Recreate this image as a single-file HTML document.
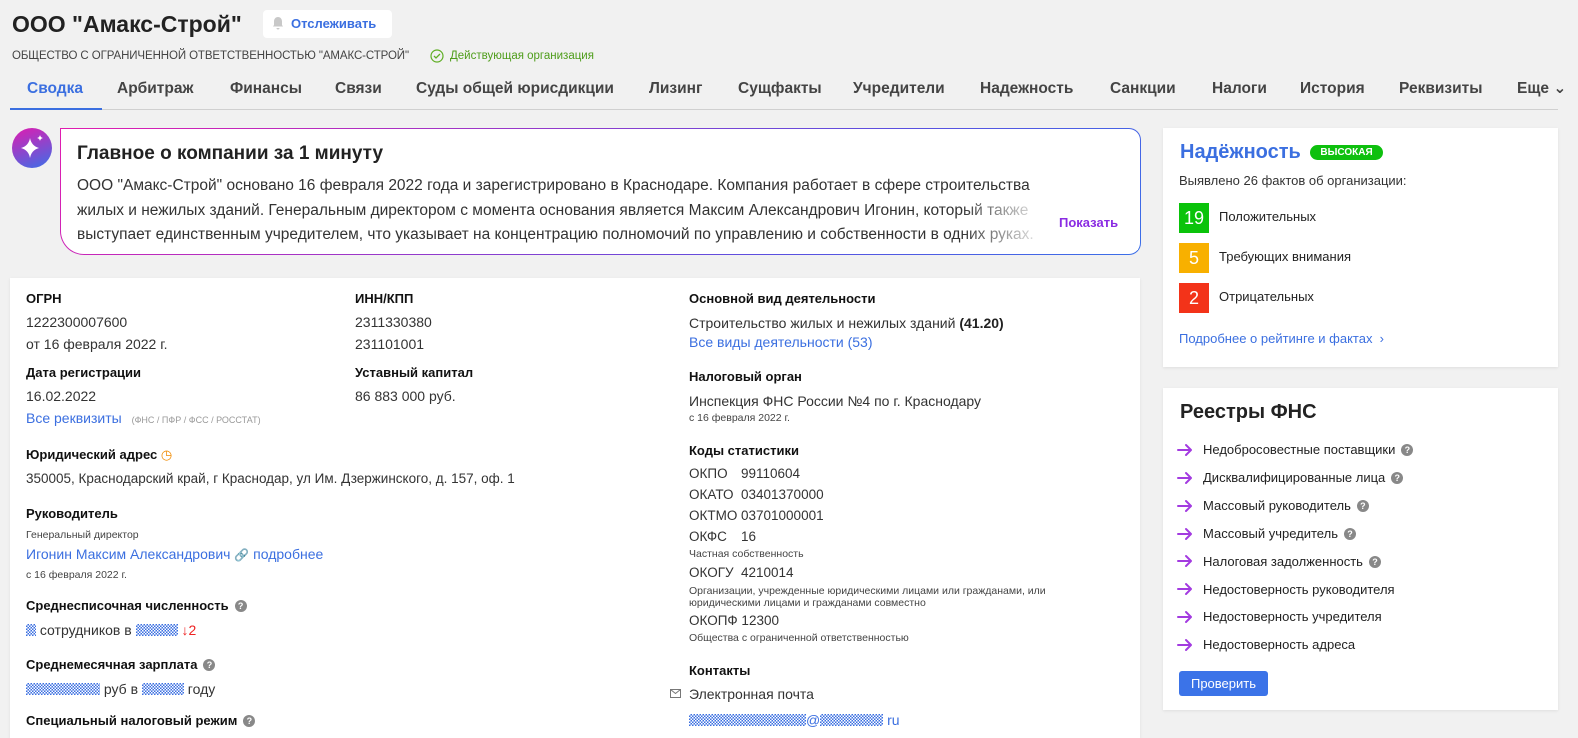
<!DOCTYPE html>
<html><head><meta charset="utf-8"><style>
*{margin:0;padding:0;box-sizing:border-box}
body{width:1578px;height:729px;overflow:hidden;background:#f1f1f1;font-family:"Liberation Sans","DejaVu Sans",sans-serif;color:#333;position:relative}
.a{position:absolute;white-space:nowrap;line-height:18px;font-size:14px}
.h{font-weight:bold;font-size:13px;color:#111}
.s{font-size:10.5px;color:#444}
.l{color:#3b6fe0}
.card{position:absolute;background:#fff;box-shadow:0 1px 3px rgba(0,0,0,.08)}
.tab{position:absolute;top:79px;font-size:15.5px;font-weight:bold;color:#444;line-height:20px}
.q{display:inline-block;width:12px;height:12px;border-radius:50%;background:#888;color:#fff;font-size:9px;line-height:12px;text-align:center;font-weight:bold;vertical-align:1px;margin-left:6px}
.chk{display:inline-block;height:12px;vertical-align:-1px;background-image:repeating-conic-gradient(#3b6fe0 0 25%,#fff 0 50%);background-size:3px 3px}
.sq{position:absolute;left:1179px;width:30px;height:30px;color:#fff;font-size:18px;text-align:center;line-height:30px}
.k{font-size:13.5px}
</style></head><body>
<div class="a" style="left:12px;top:10px;font-size:23px;line-height:28px;font-weight:bold;color:#222">ООО "Амакс-Строй"</div>
<div class="card" style="left:263px;top:10px;width:129px;height:28px;border-radius:4px;box-shadow:none"></div>
<svg style="position:absolute;left:272px;top:16px" width="12" height="14" viewBox="0 0 12 14"><path d="M6 1c-2.5 0-4 2-4 4.5V9L1 10.5h10L10 9V5.5C10 3 8.5 1 6 1zM4.5 12a1.5 1.5 0 003 0z" fill="#c8c8c8"/></svg>
<div class="a l" style="left:291px;top:15px;font-size:13px;font-weight:bold">Отслеживать</div>
<div class="a" style="left:12px;top:47px;font-size:11.5px;color:#444;letter-spacing:-.1px">ОБЩЕСТВО С ОГРАНИЧЕННОЙ ОТВЕТСТВЕННОСТЬЮ "АМАКС-СТРОЙ"</div>
<svg style="position:absolute;left:430px;top:49px" width="14" height="14"><circle cx="7" cy="7" r="6" fill="none" stroke="#5fae24" stroke-width="1.2"/><path d="M4 7l2 2 4-4" fill="none" stroke="#5fae24" stroke-width="1.3"/></svg>
<div class="a" style="left:450px;top:47px;font-size:11.5px;color:#4e9d1a">Действующая организация</div>

<div class="tab" style="left:27px;color:#3b6fe0">Сводка</div>
<div class="tab" style="left:117px">Арбитраж</div>
<div class="tab" style="left:230px">Финансы</div>
<div class="tab" style="left:335px">Связи</div>
<div class="tab" style="left:416px">Суды общей юрисдикции</div>
<div class="tab" style="left:649px">Лизинг</div>
<div class="tab" style="left:738px">Сущфакты</div>
<div class="tab" style="left:853px">Учредители</div>
<div class="tab" style="left:980px">Надежность</div>
<div class="tab" style="left:1110px">Санкции</div>
<div class="tab" style="left:1212px">Налоги</div>
<div class="tab" style="left:1300px">История</div>
<div class="tab" style="left:1399px">Реквизиты</div>
<div class="tab" style="left:1517px">Еще ⌄</div>
<div style="position:absolute;left:10px;top:109px;width:1548px;height:1px;background:#d0d0d0"></div>
<div style="position:absolute;left:10px;top:108px;width:92px;height:2px;background:#3b6fe0"></div>

<div style="position:absolute;left:12px;top:128px;width:40px;height:40px;border-radius:50%;background:linear-gradient(160deg,#e01cb0,#3b6fe8)"></div>
<svg style="position:absolute;left:12px;top:128px" width="40" height="40"><path d="M18 10q1.5 8 9 10q-7.5 2-9 10q-1.5-8-9-10q7.5-2 9-10z" fill="#fff"/><path d="M28 7q.5 2.5 3 3q-2.5.5-3 3q-.5-2.5-3-3q2.5-.5 3-3z" fill="#fff"/></svg>
<div style="position:absolute;left:60px;top:128px;width:1081px;height:127px;border-radius:0 12px 12px 24px;background:linear-gradient(135deg,#e01cb0,#5a50e0 70%,#3b6fe8);padding:1px">
<div style="width:100%;height:100%;background:#fff;border-radius:0 11px 11px 23px"></div></div>
<div class="a" style="left:77px;top:142px;font-size:19px;line-height:24px;font-weight:bold;color:#222">Главное о компании за 1 минуту</div>
<div style="position:absolute;left:77px;top:174px;width:1020px;font-size:15.5px;line-height:24.5px;color:#333;height:74px;overflow:hidden;white-space:nowrap">ООО "Амакс-Строй" основано 16 февраля 2022 года и зарегистрировано в Краснодаре. Компания работает в сфере строительства<br>жилых и нежилых зданий. Генеральным директором с момента основания является Максим Александрович Игонин, который также<br>выступает единственным учредителем, что указывает на концентрацию полномочий по управлению и собственности в одних руках.</div>
<div style="position:absolute;left:960px;top:200px;width:178px;height:50px;background:linear-gradient(90deg,rgba(255,255,255,0),#fff 50%)"></div>
<div class="a" style="left:1059px;top:214px;font-size:13px;color:#8a2be2;font-weight:bold">Показать</div>

<div class="card" style="left:10px;top:278px;width:1130px;height:460px"></div>
<div class="a h" style="left:26px;top:290px">ОГРН</div>
<div class="a" style="left:26px;top:313px">1222300007600</div>
<div class="a" style="left:26px;top:335px">от 16 февраля 2022 г.</div>
<div class="a h" style="left:26px;top:364px">Дата регистрации</div>
<div class="a" style="left:26px;top:387px">16.02.2022</div>
<div class="a l" style="left:26px;top:409px">Все реквизиты <span style="font-size:9px;color:#999;margin-left:6px">(ФНС / ПФР / ФСС / РОССТАТ)</span></div>
<div class="a h" style="left:26px;top:446px">Юридический адрес <span style="color:#f08a00;font-weight:normal">◷</span></div>
<div class="a" style="left:26px;top:470px;font-size:13.5px">350005, Краснодарский край, г Краснодар, ул Им. Дзержинского, д. 157, оф. 1</div>
<div class="a h" style="left:26px;top:505px">Руководитель</div>
<div class="a s" style="left:26px;top:526px">Генеральный директор</div>
<div class="a l" style="left:26px;top:545px">Игонин Максим Александрович <span style="font-size:12px">🔗</span> подробнее</div>
<div class="a s" style="left:26px;top:566px">с 16 февраля 2022 г.</div>
<div class="a h" style="left:26px;top:597px">Среднесписочная численность<span class="q">?</span></div>
<div class="a" style="left:26px;top:621px"><span class="chk" style="width:10px"></span> сотрудников в <span class="chk" style="width:42px"></span> <span style="color:#e22">↓2</span></div>
<div class="a h" style="left:26px;top:656px">Среднемесячная зарплата<span class="q">?</span></div>
<div class="a" style="left:26px;top:680px"><span class="chk" style="width:74px"></span> руб в <span class="chk" style="width:42px"></span> году</div>
<div class="a h" style="left:26px;top:712px">Специальный налоговый режим<span class="q">?</span></div>

<div class="a h" style="left:355px;top:290px">ИНН/КПП</div>
<div class="a" style="left:355px;top:313px">2311330380</div>
<div class="a" style="left:355px;top:335px">231101001</div>
<div class="a h" style="left:355px;top:364px">Уставный капитал</div>
<div class="a" style="left:355px;top:387px">86 883 000 руб.</div>

<div class="a h" style="left:689px;top:290px">Основной вид деятельности</div>
<div class="a" style="left:689px;top:314px">Строительство жилых и нежилых зданий <b style="color:#222">(41.20)</b></div>
<div class="a l" style="left:689px;top:333px">Все виды деятельности (53)</div>
<div class="a h" style="left:689px;top:368px">Налоговый орган</div>
<div class="a" style="left:689px;top:392px">Инспекция ФНС России №4 по г. Краснодару</div>
<div class="a s" style="left:689px;top:409px">с 16 февраля 2022 г.</div>
<div class="a h" style="left:689px;top:442px">Коды статистики</div>
<div class="a k" style="left:689px;top:465px">ОКПО</div><div class="a k" style="left:741px;top:465px">99110604</div>
<div class="a k" style="left:689px;top:486px">ОКАТО</div><div class="a k" style="left:741px;top:486px">03401370000</div>
<div class="a k" style="left:689px;top:507px">ОКТМО</div><div class="a k" style="left:741px;top:507px">03701000001</div>
<div class="a k" style="left:689px;top:528px">ОКФС</div><div class="a k" style="left:741px;top:528px">16</div>
<div class="a s" style="left:689px;top:545px">Частная собственность</div>
<div class="a k" style="left:689px;top:564px">ОКОГУ</div><div class="a k" style="left:741px;top:564px">4210014</div>
<div class="a s" style="left:689px;top:585px;line-height:12px">Организации, учрежденные юридическими лицами или гражданами, или<br>юридическими лицами и гражданами совместно</div>
<div class="a k" style="left:689px;top:612px">ОКОПФ 12300</div>
<div class="a s" style="left:689px;top:629px">Общества с ограниченной ответственностью</div>
<div class="a h" style="left:689px;top:662px">Контакты</div>
<svg style="position:absolute;left:670px;top:689px" width="11" height="9"><rect x=".5" y=".5" width="10" height="8" fill="none" stroke="#777"/><path d="M.5 .5l5 4 5-4" fill="none" stroke="#777"/></svg>
<div class="a" style="left:689px;top:685px">Электронная почта</div>
<div class="a" style="left:689px;top:711px"><span class="chk" style="width:117px"></span><span class="l">@</span><span class="chk" style="width:63px"></span> <span class="l">ru</span></div>

<div class="card" style="left:1163px;top:128px;width:395px;height:239px"></div>
<div class="a" style="left:1180px;top:140px;font-size:20px;line-height:24px;font-weight:bold;color:#3b6fe0">Надёжность</div>
<div class="a" style="left:1310px;top:145px;width:73px;height:15px;border-radius:8px;background:#0ec00e;color:#fff;font-size:10px;line-height:15px;font-weight:bold;text-align:center">ВЫСОКАЯ</div>
<div class="a" style="left:1179px;top:172px;font-size:13px">Выявлено 26 фактов об организации:</div>
<div class="sq" style="top:203px;background:#0ac30a">19</div>
<div class="sq" style="top:243px;background:#f8b000">5</div>
<div class="sq" style="top:283px;background:#f33319">2</div>
<div class="a" style="left:1219px;top:208px;font-size:13px;color:#222">Положительных</div>
<div class="a" style="left:1219px;top:248px;font-size:13px;color:#222">Требующих внимания</div>
<div class="a" style="left:1219px;top:288px;font-size:13px;color:#222">Отрицательных</div>
<div class="a l" style="left:1179px;top:330px;font-size:13px">Подробнее о рейтинге и фактах &nbsp;›</div>

<div class="card" style="left:1163px;top:388px;width:395px;height:322px"></div>
<div class="a" style="left:1180px;top:400px;font-size:20px;line-height:24px;font-weight:bold;color:#222">Реестры ФНС</div>
<svg style="position:absolute;left:1177px;top:443px" width="16" height="210">
<g fill="none" stroke="#a33be0" stroke-width="2" stroke-linecap="round" stroke-linejoin="round">
<path d="M1 7h13M9 2l5 5-5 5"/><path transform="translate(0,28)" d="M1 7h13M9 2l5 5-5 5"/><path transform="translate(0,56)" d="M1 7h13M9 2l5 5-5 5"/><path transform="translate(0,84)" d="M1 7h13M9 2l5 5-5 5"/><path transform="translate(0,111)" d="M1 7h13M9 2l5 5-5 5"/><path transform="translate(0,139)" d="M1 7h13M9 2l5 5-5 5"/><path transform="translate(0,167)" d="M1 7h13M9 2l5 5-5 5"/><path transform="translate(0,195)" d="M1 7h13M9 2l5 5-5 5"/></g></svg>
<div style="position:absolute;left:1203px;top:436px;font-size:13px;line-height:27.9px;color:#222;white-space:nowrap">Недобросовестные поставщики<span class="q">?</span><br>Дисквалифицированные лица<span class="q">?</span><br>Массовый руководитель<span class="q">?</span><br>Массовый учредитель<span class="q">?</span><br>Налоговая задолженность<span class="q">?</span><br>Недостоверность руководителя<br>Недостоверность учредителя<br>Недостоверность адреса</div>
<div class="a" style="left:1179px;top:671px;width:89px;height:25px;border-radius:3px;background:#3b73e8;color:#fff;font-size:13px;line-height:25px;text-align:center">Проверить</div>
</body></html>
